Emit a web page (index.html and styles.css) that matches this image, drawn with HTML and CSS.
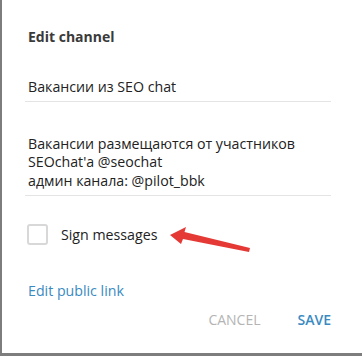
FILE: index.html
```html
<!DOCTYPE html>
<html>
<head>
<meta charset="utf-8">
<link rel="stylesheet" href="styles.css">
</head>
<body>
<div class="dialog">
  <div class="title">Edit channel</div>
  <div class="field name">Вакансии из SEO chat</div>
  <div class="field desc">Вакансии размещаются от участников<br>SEOchat'a @seochat<br>админ канала: @pilot_bbk</div>
  <label class="check">
    <span class="box"></span>
    <span class="check-label">Sign messages</span>
  </label>
  <div class="link">Edit public link</div>
  <div class="buttons">
    <span class="btn cancel">CANCEL</span>
    <span class="btn save">SAVE</span>
  </div>
  <svg class="arrow" width="90" height="32" viewBox="0 0 90 32">
    <path d="M2 9 L18 1 L16.5 6 L82 22 L81 26 L15 13 L13 18 Z" fill="#e53935"/>
  </svg>
</div>
</body>
</html>
```
FILE: styles.css
```css
html, body {
  margin: 0;
  padding: 0;
  background: #ffffff;
}
body {
  font-family: "Open Sans", "Noto Sans", sans-serif;
  color: #222;
}
.dialog {
  position: relative;
  box-sizing: border-box;
  width: 362px;
  height: 356px;
  border-left: 2px solid #7d7d7d;
  border-bottom: 3px solid #7d7d7d;
  padding: 27px 31px 0 23px;
  display: flex;
  flex-direction: column;
}
.title {
  font-size: 14px;
  font-weight: 700;
  color: #3a3a3a;
  line-height: 20px;
  padding-left: 3px;
}
.field {
  font-size: 14.2px;
  line-height: 18.5px;
  padding: 0 3px 4px 3px;
  border-bottom: 1px solid #e4e4e4;
  color: #222;
}
.name {
  margin-top: 31px;
}
.desc {
  margin-top: 33px;
  padding-bottom: 5px;
}
.check {
  display: flex;
  align-items: center;
  gap: 13px;
  margin-top: 28px;
  padding-left: 2px;
}
.box {
  box-sizing: border-box;
  width: 21px;
  height: 21px;
  border: 2px solid #d8d8d8;
  border-radius: 3px;
}
.check-label {
  font-size: 14.2px;
  color: #222;
}
.link {
  margin-top: 36px;
  padding-left: 3px;
  font-size: 14.2px;
  color: #3a8ac2;
}
.buttons {
  display: flex;
  justify-content: flex-end;
  gap: 37px;
  margin-top: 10px;
  font-size: 14px;
}
.btn {
  font-weight: 600;
}
.cancel {
  color: #b4b4b4;
  font-weight: 400;
}
.save {
  color: #3a8ac2;
}
.arrow {
  position: absolute;
  left: 166px;
  top: 226px;
}
```
